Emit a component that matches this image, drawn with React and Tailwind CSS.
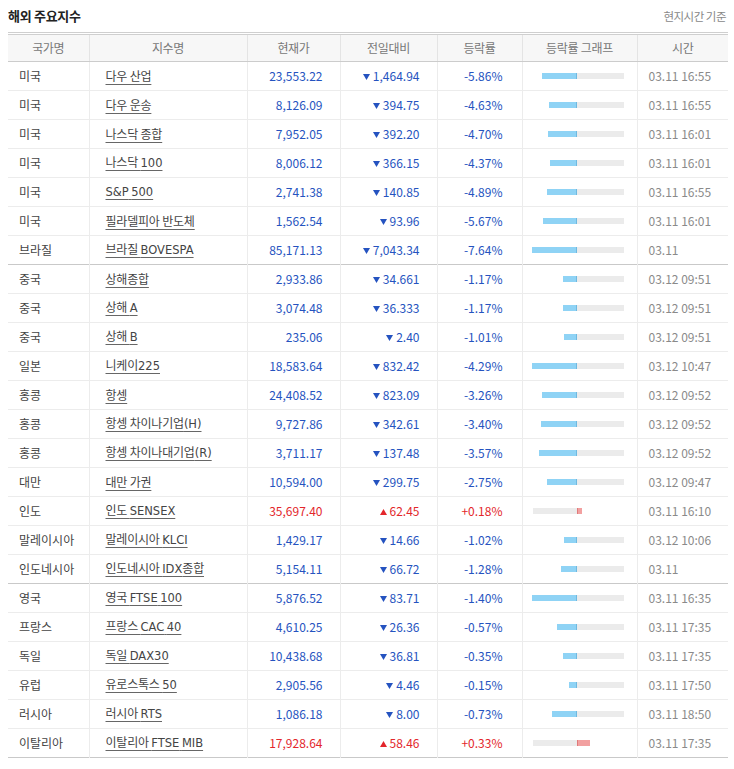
import React from "react";

const sections = [
  {
    max: 7.64,
    rows: [
      ["미국", "다우 산업", "23,553.22", "1,464.94", -5.86, "03.11 16:55"],
      ["미국", "다우 운송", "8,126.09", "394.75", -4.63, "03.11 16:55"],
      ["미국", "나스닥 종합", "7,952.05", "392.20", -4.7, "03.11 16:01"],
      ["미국", "나스닥 100", "8,006.12", "366.15", -4.37, "03.11 16:01"],
      ["미국", "S&P 500", "2,741.38", "140.85", -4.89, "03.11 16:55"],
      ["미국", "필라델피아 반도체", "1,562.54", "93.96", -5.67, "03.11 16:01"],
      ["브라질", "브라질 BOVESPA", "85,171.13", "7,043.34", -7.64, "03.11"],
    ],
  },
  {
    max: 4.29,
    rows: [
      ["중국", "상해종합", "2,933.86", "34.661", -1.17, "03.12 09:51"],
      ["중국", "상해 A", "3,074.48", "36.333", -1.17, "03.12 09:51"],
      ["중국", "상해 B", "235.06", "2.40", -1.01, "03.12 09:51"],
      ["일본", "니케이225", "18,583.64", "832.42", -4.29, "03.12 10:47"],
      ["홍콩", "항셍", "24,408.52", "823.09", -3.26, "03.12 09:52"],
      ["홍콩", "항셍 차이나기업(H)", "9,727.86", "342.61", -3.4, "03.12 09:52"],
      ["홍콩", "항셍 차이나대기업(R)", "3,711.17", "137.48", -3.57, "03.12 09:52"],
      ["대만", "대만 가권", "10,594.00", "299.75", -2.75, "03.12 09:47"],
      ["인도", "인도 SENSEX", "35,697.40", "62.45", 0.18, "03.11 16:10"],
      ["말레이시아", "말레이시아 KLCI", "1,429.17", "14.66", -1.02, "03.12 10:06"],
      ["인도네시아", "인도네시아 IDX종합", "5,154.11", "66.72", -1.28, "03.11"],
    ],
  },
  {
    max: 1.4,
    rows: [
      ["영국", "영국 FTSE 100", "5,876.52", "83.71", -1.4, "03.11 16:35"],
      ["프랑스", "프랑스 CAC 40", "4,610.25", "26.36", -0.57, "03.11 17:35"],
      ["독일", "독일 DAX30", "10,438.68", "36.81", -0.35, "03.11 17:35"],
      ["유럽", "유로스톡스 50", "2,905.56", "4.46", -0.15, "03.11 17:50"],
      ["러시아", "러시아 RTS", "1,086.18", "8.00", -0.73, "03.11 18:50"],
      ["이탈리아", "이탈리아 FTSE MIB", "17,928.64", "58.46", 0.33, "03.11 17:35"],
    ],
  },
];

function Tri({ up }) {
  return (
    <svg width="7" height="6" viewBox="0 0 7 6" className="inline-block mr-[3px] align-[1px]">
      {up ? (
        <polygon points="3.5,0 7,6 0,6" fill="#e3262b" />
      ) : (
        <polygon points="0,0 7,0 3.5,6" fill="#2553c0" />
      )}
    </svg>
  );
}

function Bar({ rate, max }) {
  const w = Math.round(3 + (Math.abs(rate) / max) * 42);
  const up = rate > 0;
  return (
    <div className="flex justify-center items-center pr-[4px]">
      <div className="w-[46px] h-[6px] flex justify-end">
        {up ? (
          <div className="w-[44px] h-[6px] bg-[#ebebeb]" />
        ) : (
          <div
            className="h-[6px] bg-[#8fd3f5] border-r border-[#6fb9e0]"
            style={{ width: w }}
          />
        )}
      </div>
      <div className="w-[47px] h-[6px] flex justify-start">
        {up ? (
          <div
            className="h-[6px] bg-[#f2a0a0] border-l border-[#e07a7a]"
            style={{ width: w }}
          />
        ) : (
          <div className="w-[47px] h-[6px] bg-[#ebebeb]" />
        )}
      </div>
    </div>
  );
}

function Name({ text }) {
  const parts = text.split(/([A-Za-z0-9&()]+)/);
  return (
    <span className="text-[#444] underline underline-offset-[3px] decoration-[#666] tracking-[-0.2px]">
      {parts.map((p, i) =>
        /^[A-Za-z0-9&()]+$/.test(p) ? (
          <span
            key={i}
            className="text-[11.5px] tracking-normal"
            style={{ fontFamily: '"DejaVu Sans", sans-serif' }}
          >
            {p}
          </span>
        ) : (
          <React.Fragment key={i}>{p}</React.Fragment>
        )
      )}
    </span>
  );
}

export default function App() {
  const font = { fontFamily: '"Noto Sans CJK KR", "Noto Sans", sans-serif' };
  return (
    <div className="bg-white w-[734px] h-[769px] px-2" style={font}>
      <div className="h-[32px] flex items-center justify-between">
        <div className="text-[13px] font-bold text-[#222] tracking-[-0.3px]">해외 주요지수</div>
        <div className="text-[11.5px] text-[#888] tracking-[-0.5px] pt-[2px]">현지시간 기준</div>
      </div>
      <table className="w-[720px] border-collapse table-fixed text-[12px]">
        <colgroup>
          <col className="w-[81px]" />
          <col className="w-[158px]" />
          <col className="w-[93px]" />
          <col className="w-[97px]" />
          <col className="w-[85px]" />
          <col className="w-[115px]" />
          <col className="w-[91px]" />
        </colgroup>
        <thead>
          <tr className="bg-[#f7f7f7] border-t-[3px] border-double border-t-[#cfcfcf] border-b border-b-[#cccccc]">
            {["국가명", "지수명", "현재가", "전일대비", "등락률", "등락률 그래프", "시간"].map((h, i) => (
              <th
                key={h}
                className={`h-[28px] p-0 font-normal text-[#777] text-center tracking-[-0.3px] ${i > 0 ? "border-l border-l-[#e4e4e4]" : ""}`}
              >
                {h}
              </th>
            ))}
          </tr>
        </thead>
        <tbody>
          {sections.map((sec, si) =>
            sec.rows.map((r, ri) => {
              const up = r[4] > 0;
              const color = up ? "text-[#e3262b]" : "text-[#2553c0]";
              const last = ri === sec.rows.length - 1;
              const rowBorder = last ? "border-b border-b-[#c9c9c9]" : "border-b border-b-[#ececec]";
              return (
                <tr key={si + "-" + ri} className={rowBorder}>
                  <td className="h-[29px] p-0 pl-[11px] text-[#444]">{r[0]}</td>
                  <td className="p-0 pl-[16px] border-l border-l-[#ececec]">
                    <Name text={r[1]} />
                  </td>
                  <td className={`p-0 pr-[17px] text-right border-l border-l-[#ececec] ${color}`}>{r[2]}</td>
                  <td className={`p-0 pr-[17px] text-right border-l border-l-[#ececec] ${color}`}>
                    <Tri up={up} />
                    {r[3]}
                  </td>
                  <td className={`p-0 pr-[19px] text-right border-l border-l-[#ececec] ${color}`}>
                    {up ? "+" : ""}
                    {r[4].toFixed(2)}%
                  </td>
                  <td className="p-0 border-l border-l-[#ececec]">
                    <Bar rate={r[4]} max={sec.max} />
                  </td>
                  <td className="p-0 pl-[11px] text-[#8a8a8a] border-l border-l-[#ececec]">{r[5]}</td>
                </tr>
              );
            })
          )}
        </tbody>
      </table>
    </div>
  );
}
